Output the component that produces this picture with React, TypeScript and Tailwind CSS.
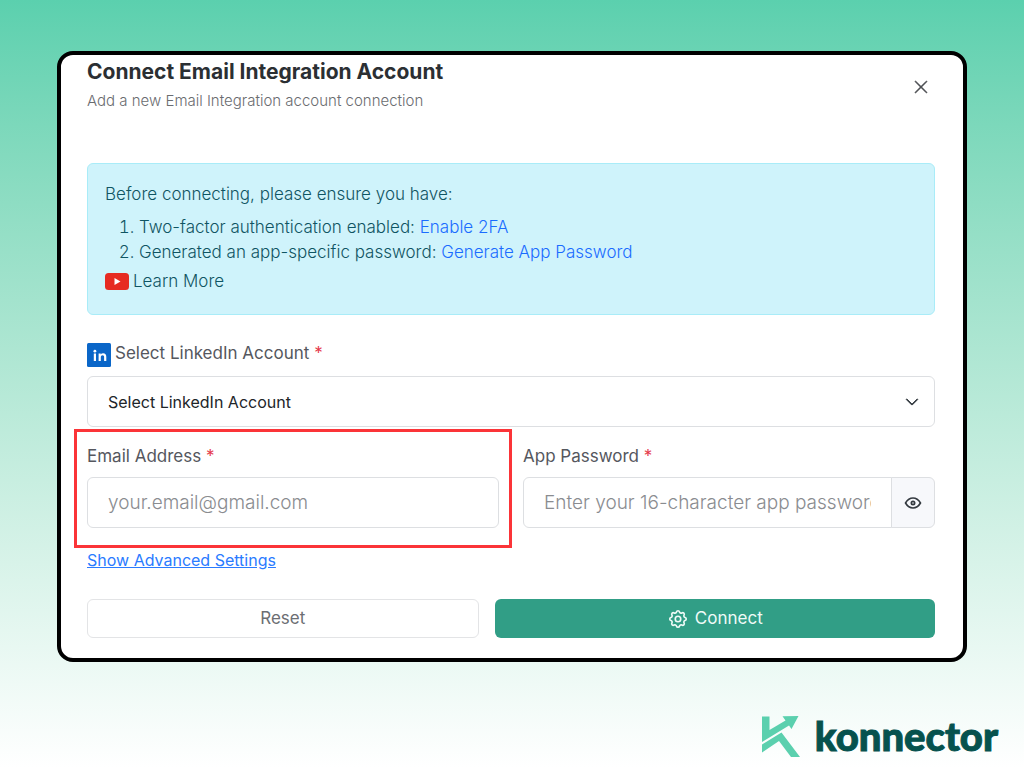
import { useState } from "react";
import type { ReactNode } from "react";
import { BsChevronDown, BsXLg } from "react-icons/bs";
import { TbEye, TbSettings } from "react-icons/tb";

function YouTubeIcon() {
  return (
    <svg viewBox="0 0 24 17" className="h-[17px] w-6" aria-hidden="true">
      <rect width="24" height="17" rx="3.5" fill="#e62b22" />
      <path d="M9.500 5 15.500 8.500 9.500 12Z" fill="#fff" />
    </svg>
  );
}

function LinkedInIcon() {
  return (
    <svg viewBox="0 0 24 24" className="size-6 shrink-0" aria-hidden="true">
      <rect width="24" height="24" rx="1.5" fill="#0a66c8" />
      <rect x="6.800" y="10.500" width="2.200" height="7.500" fill="#fff" />
      <circle cx="7.900" cy="8.200" r="1.400" fill="#fff" />
      <path
        d="M11.600 10.500h2.100v1c.5-.8 1.300-1.200 2.400-1.200 2.200 0 3.200 1.300 3.200 3.400V18h-2.200v-3.900c0-1.100-.4-1.800-1.500-1.800s-1.800.8-1.800 1.900V18h-2.200Z"
        fill="#fff"
      />
    </svg>
  );
}

function KonnectorMark() {
  return (
    <svg viewBox="0 0 38 41" className="h-[41px] w-[38px]" aria-hidden="true">
      <g fill="#5bd0ae">
        <path d="M0 .5H7.500V14L23.500 4.500 20.500 .3 36.500 0 29.500 13 27 9.500 0 26Z" />
        <path d="M0 28.500 19.500 16.500 38 41H29L17 25 0 36.500Z" />
      </g>
    </svg>
  );
}

function Label({ htmlFor, children }: { htmlFor: string; children: ReactNode }) {
  return (
    <label htmlFor={htmlFor} className="block text-[17px] leading-5 text-[#55575e]">
      {children} <span className="text-[#e5394a]">*</span>
    </label>
  );
}

const fieldClass =
  "h-[51px] w-full min-w-0 rounded-md border border-[#dddfe2] bg-white px-5 text-[19px] font-light text-[#212529] outline-none placeholder:text-[#8a8c90]";

export default function App() {
  const [visible, setVisible] = useState(false);

  return (
    <main className="flex min-h-screen flex-col bg-linear-to-b from-[#5bd0ae] to-white px-[57px] pt-[51px] font-['Inter',sans-serif]">
      <section className="rounded-2xl border-4 border-black bg-white pt-1 pr-7 pb-5 pl-[26px]">
        <header className="flex justify-between">
          <div>
            <h1 className="text-[21px] leading-[26px] font-bold text-[#2b2f33]">
              Connect Email Integration Account
            </h1>
            <p className="mt-1 text-[15px] leading-6 font-light text-[#6a6c70]">
              Add a new Email Integration account connection
            </p>
          </div>
          <button type="button" aria-label="Close" className="mt-[14px] flex size-7 items-center justify-center self-start text-[#44474b]">
            <BsXLg className="size-4" strokeWidth={0.6} />
          </button>
        </header>

        <div className="mt-[50px] rounded-md border border-[#a9ecf8] bg-[#cff3fb] px-[17px] pt-[18px] pb-5 text-[17px] leading-[25px] font-light text-[#0f5563]">
          <p>Before connecting, please ensure you have:</p>
          <ol className="mt-2 list-decimal pl-[34px]">
            <li>
              Two-factor authentication enabled:{" "}
              <a href="#2fa" className="text-[#1a6cff]">Enable 2FA</a>
            </li>
            <li>
              Generated an app-specific password:{" "}
              <a href="#app-password" className="text-[#1a6cff]">Generate App Password</a>
            </li>
          </ol>
          <a href="#learn" className="mt-1 flex items-center gap-1">
            <YouTubeIcon />
            Learn More
          </a>
        </div>

        <form onSubmit={(e) => e.preventDefault()}>
          <div className="mt-7 flex gap-1">
            <LinkedInIcon />
            <Label htmlFor="account">Select LinkedIn Account</Label>
          </div>
          <div className="mt-[9px] grid items-center">
            <select
              id="account"
              className="col-start-1 row-start-1 h-[51px] w-full appearance-none rounded-md border border-[#dddfe2] bg-white px-5 text-base text-[#212529]"
            >
              <option>Select LinkedIn Account</option>
            </select>
            <BsChevronDown className="pointer-events-none col-start-1 row-start-1 mr-4 size-[14px] justify-self-end text-[#343a40]" strokeWidth={1} />
          </div>

          <div className="mt-[19px] grid grid-cols-2 gap-6">
            <div className="relative">
              <Label htmlFor="email">Email Address</Label>
              <input id="email" type="email" placeholder="your.email@gmail.com" className={`mt-[11px] ${fieldClass}`} />
              <div className="pointer-events-none absolute -inset-x-[13px] -top-[17px] -bottom-5 border-3 border-[#fb3438]" />
            </div>
            <div>
              <Label htmlFor="password">App Password</Label>
              <div className="mt-[11px] flex">
                <input
                  id="password"
                  type={visible ? "text" : "password"}
                  placeholder="Enter your 16-character app password"
                  className={`rounded-r-none ${fieldClass}`}
                />
                <button
                  type="button"
                  aria-label="Show password"
                  onClick={() => setVisible(!visible)}
                  className="-ml-px flex w-11 shrink-0 items-center justify-center rounded-r-md border border-[#dddfe2] bg-[#f7f8fb] text-[#343a40]"
                >
                  <TbEye className="size-5" />
                </button>
              </div>
            </div>
          </div>

          <a href="#advanced" className="mt-5 inline-block text-base leading-6 text-[#2a7bff] underline">
            Show Advanced Settings
          </a>

          <div className="mt-[27px] grid grid-cols-[8fr_9fr] gap-4 text-[17px]">
            <button type="reset" className="h-[39px] rounded-md border border-[#e3e4e6] text-[#6c6e73]">
              Reset
            </button>
            <button type="submit" className="flex h-[39px] items-center justify-center gap-1.5 rounded-md bg-[#319e86] text-[#eefaf7]">
              <TbSettings className="size-[22px]" strokeWidth={1.8} />
              Connect
            </button>
          </div>
        </form>
      </section>

      <footer className="mt-[54px] -mr-[31px] flex items-start justify-end gap-[15px]">
        <KonnectorMark />
        <span className="font-['Lato',sans-serif] text-[40px] leading-[41px] font-black text-[#06524e] [-webkit-text-stroke:1px_#06524e]">
          konnector
        </span>
      </footer>
    </main>
  );
}
